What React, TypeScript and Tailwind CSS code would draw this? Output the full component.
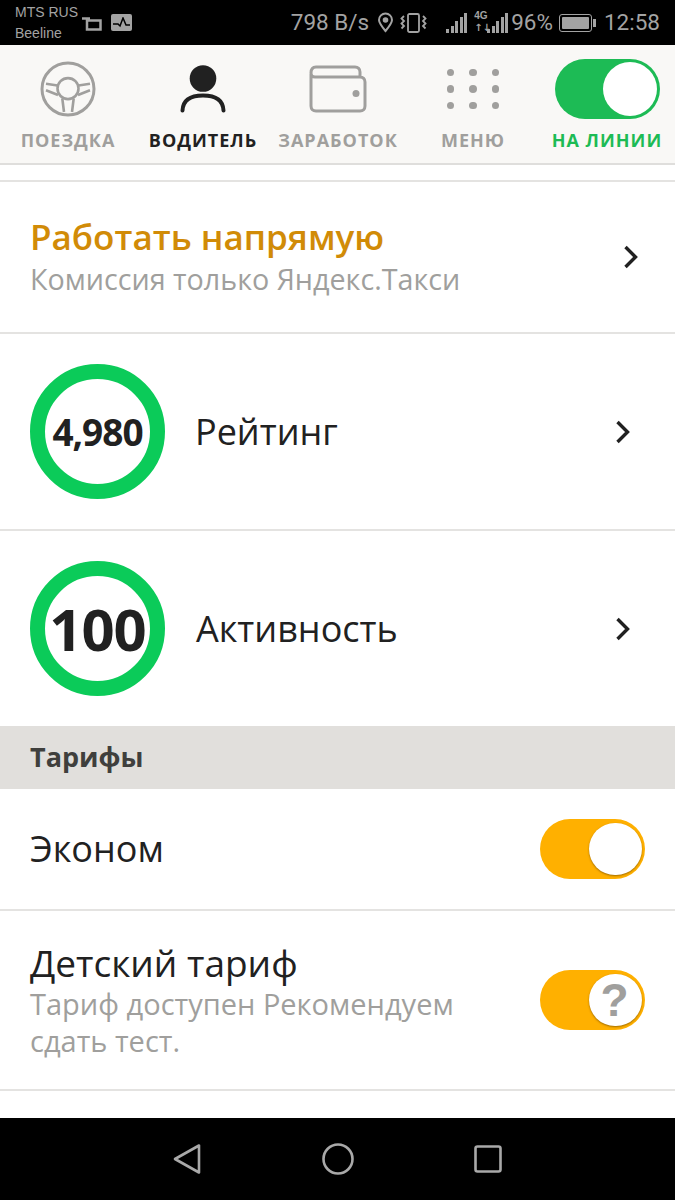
import React from "react";

const font = { fontFamily: '"Open Sans", "Noto Sans", sans-serif' };

const Chevron = () => (
  <svg width="16" height="24" viewBox="0 0 16 24" fill="none">
    <path d="M2.5 2 L12.5 12 L2.5 22" stroke="#212121" strokeWidth="3.4" />
  </svg>
);

const Wheel = () => (
  <svg width="56" height="56" viewBox="0 0 56 56" fill="none" stroke="#a09f9d" strokeWidth="2.6">
    <circle cx="28" cy="28" r="26" strokeWidth="3" />
    <circle cx="28" cy="27.6" r="10.5" />
    <path d="M6 22.7 L17.5 24.5 M50 22.7 L38.5 24.5 M6 29.3 L18 34 M50 29.3 L38 34 M22.3 37.5 L24 51 M33.7 37.5 L32 51" />
  </svg>
);

const Driver = () => (
  <svg width="46" height="48" viewBox="0 0 46 48" fill="none">
    <circle cx="23" cy="13.5" r="13.3" fill="#212121" />
    <path d="M2.5 45.5 C3 35 11 30.5 23 30.5 C35 30.5 43 35 43.5 45.5" stroke="#212121" strokeWidth="4" strokeLinecap="round" />
  </svg>
);

const Wallet = () => (
  <svg width="58" height="48" viewBox="0 0 58 48" fill="none" stroke="#a09f9d" strokeWidth="3">
    <path d="M2 9 V41 C2 44 4 46 7 46 H51 C54 46 56 44 56 41 V17 C56 14 54 12 51 12 H6 C3.5 12 2 10.5 2 8 C2 4 4 2 7 2 H46 C49 2 51 4 51 7 V12" />
    <circle cx="47" cy="28.5" r="3.5" fill="#a09f9d" stroke="none" />
  </svg>
);

const Dots = () => (
  <div className="grid grid-cols-3 gap-x-[15px] gap-y-[9px]">
    {Array.from({ length: 9 }).map((_, i) => (
      <div key={i} className="w-[7.5px] h-[7.5px] rounded-full bg-[#a09f9d]" />
    ))}
  </div>
);

const NavItem = ({ icon, label, color, className }: { icon: React.ReactNode; label: string; color: string; className: string }) => (
  <div className={`flex flex-col items-center shrink-0 ${className}`}>
    <div className="h-[60px] flex items-center justify-center">{icon}</div>
    <div className={`mt-[10px] text-[18px] leading-[22px] font-bold tracking-[1px] whitespace-nowrap ${color}`}>{label}</div>
  </div>
);

const Ring = ({ value, size }: { value: string; size: string }) => (
  <div className="w-[135px] h-[135px] rounded-full border-[15px] border-[#0bcb59] flex items-center justify-center shrink-0">
    <span className={`font-bold text-[#212121] tracking-[-1px] whitespace-nowrap ${size}`}>{value}</span>
  </div>
);

const Toggle = ({ question }: { question?: boolean }) => (
  <div className="w-[105px] h-[60px] rounded-full bg-[#ffb000] relative shrink-0">
    <div className="absolute right-[3px] top-[4px] w-[53px] h-[52px] rounded-full bg-white shadow-[0_1px_2px_rgba(120,80,0,0.7)] flex items-center justify-center">
      {question && <span className="text-[#a09f9d] text-[46px] leading-none font-bold pr-[2px]" style={{ fontFamily: '"Liberation Sans", sans-serif' }}>?</span>}
    </div>
  </div>
);

const Bars = () => (
  <>
    {[4, 7, 12, 16, 20].map((h, i) => (
      <div key={i} className="w-[3px] bg-[#a3a3a3]" style={{ height: h }} />
    ))}
  </>
);

const StatusBar = () => (
  <div className="h-[45px] bg-black flex items-center text-[#a3a3a3] pl-[15px] pr-[15px]">
    <div className="text-[14px] leading-[21px] w-[67px]" style={{ fontFamily: '"Liberation Sans", sans-serif' }}>
      <div>MTS RUS</div>
      <div>Beeline</div>
    </div>
    <svg width="20" height="16" viewBox="0 0 20 16" fill="none" stroke="#a3a3a3" strokeWidth="2.5" className="mt-[2px]">
      <path d="M0 2.5 H8 M5 2.5 V13.5 H18.5 V4.5 H5" />
    </svg>
    <div className="ml-[9px] w-[21px] h-[17px] rounded-[2px] bg-[#a3a3a3] flex items-center justify-center">
      <svg width="17" height="11" viewBox="0 0 17 11" fill="none" stroke="#000" strokeWidth="1.5">
        <path d="M0 7 H5 L7 9 L10 1 L13 8 H17" />
      </svg>
    </div>
    <div className="ml-auto flex items-center">
      <span className="text-[22.5px] leading-none" style={{ fontFamily: '"Roboto", sans-serif' }}>798 B/s</span>
      <svg width="17" height="21" viewBox="0 0 17 21" fill="none" stroke="#a3a3a3" strokeWidth="2" className="ml-[8px]">
        <path d="M8.5 19 C4 13.5 2 11 2 8 A6.5 6.5 0 0 1 15 8 C15 11 13 13.5 8.5 19 Z" />
        <circle cx="8.5" cy="8" r="1.8" fill="#a3a3a3" />
      </svg>
      <svg width="28" height="20" viewBox="0 0 28 20" fill="none" stroke="#a3a3a3" strokeWidth="1.8" className="ml-[6px]">
        <rect x="8" y="1" width="11" height="18" rx="1.5" />
        <path d="M4 3 L1.5 5.5 L4 8 L1.5 10.5 L4 13 L1.5 15.5 M23 3 L25.5 5.5 L23 8 L25.5 10.5 L23 13 L25.5 15.5" />
      </svg>
      <div className="ml-[18px] flex items-end gap-[1.5px] h-[20px]">
        <Bars />
      </div>
      <div className="ml-[7px] relative w-[34px] h-[20px] flex items-end justify-end gap-[1.5px]">
        <span className="absolute left-0 top-[-2px] text-[10px] leading-[10px] font-bold" style={{ fontFamily: '"Liberation Sans", sans-serif' }}>4G</span>
        <span className="absolute left-0 top-[10px] text-[10px] leading-[10px] font-bold" style={{ fontFamily: '"DejaVu Sans", sans-serif' }}>↑↓</span>
        <Bars />
      </div>
      <span className="ml-[3px] text-[22.5px] leading-none" style={{ fontFamily: '"Roboto", sans-serif' }}>96%</span>
      <div className="ml-[6px] w-[33px] h-[18px] rounded-[3px] border border-[#a3a3a3] p-[2px]">
        <div className="w-full h-full bg-[#a3a3a3] rounded-[1px]" />
      </div>
      <div className="ml-[1px] w-[3px] h-[8px] bg-[#a3a3a3]" />
      <span className="ml-[8px] text-[22.5px] leading-none" style={{ fontFamily: '"Roboto", sans-serif' }}>12:58</span>
    </div>
  </div>
);

const BottomBar = () => (
  <div className="h-[82px] bg-black flex items-center justify-center gap-[120px] pr-[2px]">
    <svg width="30" height="32" viewBox="0 0 30 32" fill="none" stroke="#a9a9a9" strokeWidth="2.6" strokeLinejoin="round">
      <path d="M27 2.5 V29.5 L3 16 Z" />
    </svg>
    <svg width="32" height="32" viewBox="0 0 32 32" fill="none" stroke="#a9a9a9" strokeWidth="2.6">
      <circle cx="16" cy="16" r="14.5" />
    </svg>
    <svg width="28" height="28" viewBox="0 0 28 28" fill="none" stroke="#a9a9a9" strokeWidth="2.6">
      <rect x="1.5" y="1.5" width="25" height="25" rx="2" />
    </svg>
  </div>
);

export default function App() {
  return (
    <div className="w-[675px] h-[1200px] flex flex-col bg-white overflow-hidden" style={font}>
      <StatusBar />
      <div className="h-[120px] bg-[#f9f8f6] border-b-2 border-[#dfdedc] pt-[14px]">
        <div className="flex pl-[21px]">
          <NavItem icon={<Wheel />} label="ПОЕЗДКА" color="text-[#a09f9d]" className="w-[94px]" />
          <NavItem icon={<Driver />} label="ВОДИТЕЛЬ" color="text-[#212121]" className="w-[106px] ml-[35px]" />
          <NavItem icon={<Wallet />} label="ЗАРАБОТОК" color="text-[#a09f9d]" className="w-[116px] ml-[24px]" />
          <NavItem icon={<Dots />} label="МЕНЮ" color="text-[#a09f9d]" className="w-[60px] ml-[47px]" />
          <NavItem
            icon={
              <div className="w-[105px] h-[60px] rounded-full bg-[#1dbb55] relative">
                <div className="absolute right-[3px] top-[3px] w-[54px] h-[54px] rounded-full bg-white" />
              </div>
            }
            label="НА ЛИНИИ"
            color="text-[#1dbb55]"
            className="w-[106px] ml-[51px]"
          />
        </div>
      </div>
      <div className="flex-1 flex flex-col min-h-0">
        <div className="h-[17px] border-b-2 border-[#e4e3e1]" />
        <div className="h-[152px] border-b-2 border-[#e4e3e1] flex items-center pl-[30px] pr-[36px]">
          <div className="flex-1">
            <div className="text-[35px] leading-[44px] font-semibold text-[#d18b07] whitespace-nowrap">Работать напрямую</div>
            <div className="text-[28.7px] leading-[40px] text-[#a09f9d] whitespace-nowrap">Комиссия только Яндекс.Такси</div>
          </div>
          <Chevron />
        </div>
        <div className="h-[197px] border-b-2 border-[#e4e3e1] flex items-center pl-[30px] pr-[44px]">
          <Ring value="4,980" size="text-[37px]" />
          <div className="flex-1 ml-[30px] text-[36px] text-[#212121]">Рейтинг</div>
          <Chevron />
        </div>
        <div className="h-[195px] flex items-center pl-[30px] pr-[44px]">
          <Ring value="100" size="text-[58px]" />
          <div className="flex-1 ml-[31px] text-[36px] text-[#212121]">Активность</div>
          <Chevron />
        </div>
        <div className="h-[63px] bg-[#e1dfdc] flex items-center pl-[30px] text-[27px] font-bold text-[#3f3f3d]">Тарифы</div>
        <div className="h-[122px] border-b-2 border-[#e4e3e1] flex items-center justify-between pl-[30px] pr-[30px]">
          <div className="text-[36px] text-[#212121]">Эконом</div>
          <Toggle />
        </div>
        <div className="h-[180px] border-b-2 border-[#e4e3e1] flex items-center justify-between pl-[30px] pr-[30px]">
          <div>
            <div className="text-[37px] leading-[44px] text-[#212121] whitespace-nowrap">Детский тариф</div>
            <div className="text-[29px] leading-[37px] text-[#a09f9d] w-[460px]">Тариф доступен Рекомендуем сдать тест.</div>
          </div>
          <Toggle question />
        </div>
        <div className="flex-1" />
      </div>
      <BottomBar />
    </div>
  );
}
